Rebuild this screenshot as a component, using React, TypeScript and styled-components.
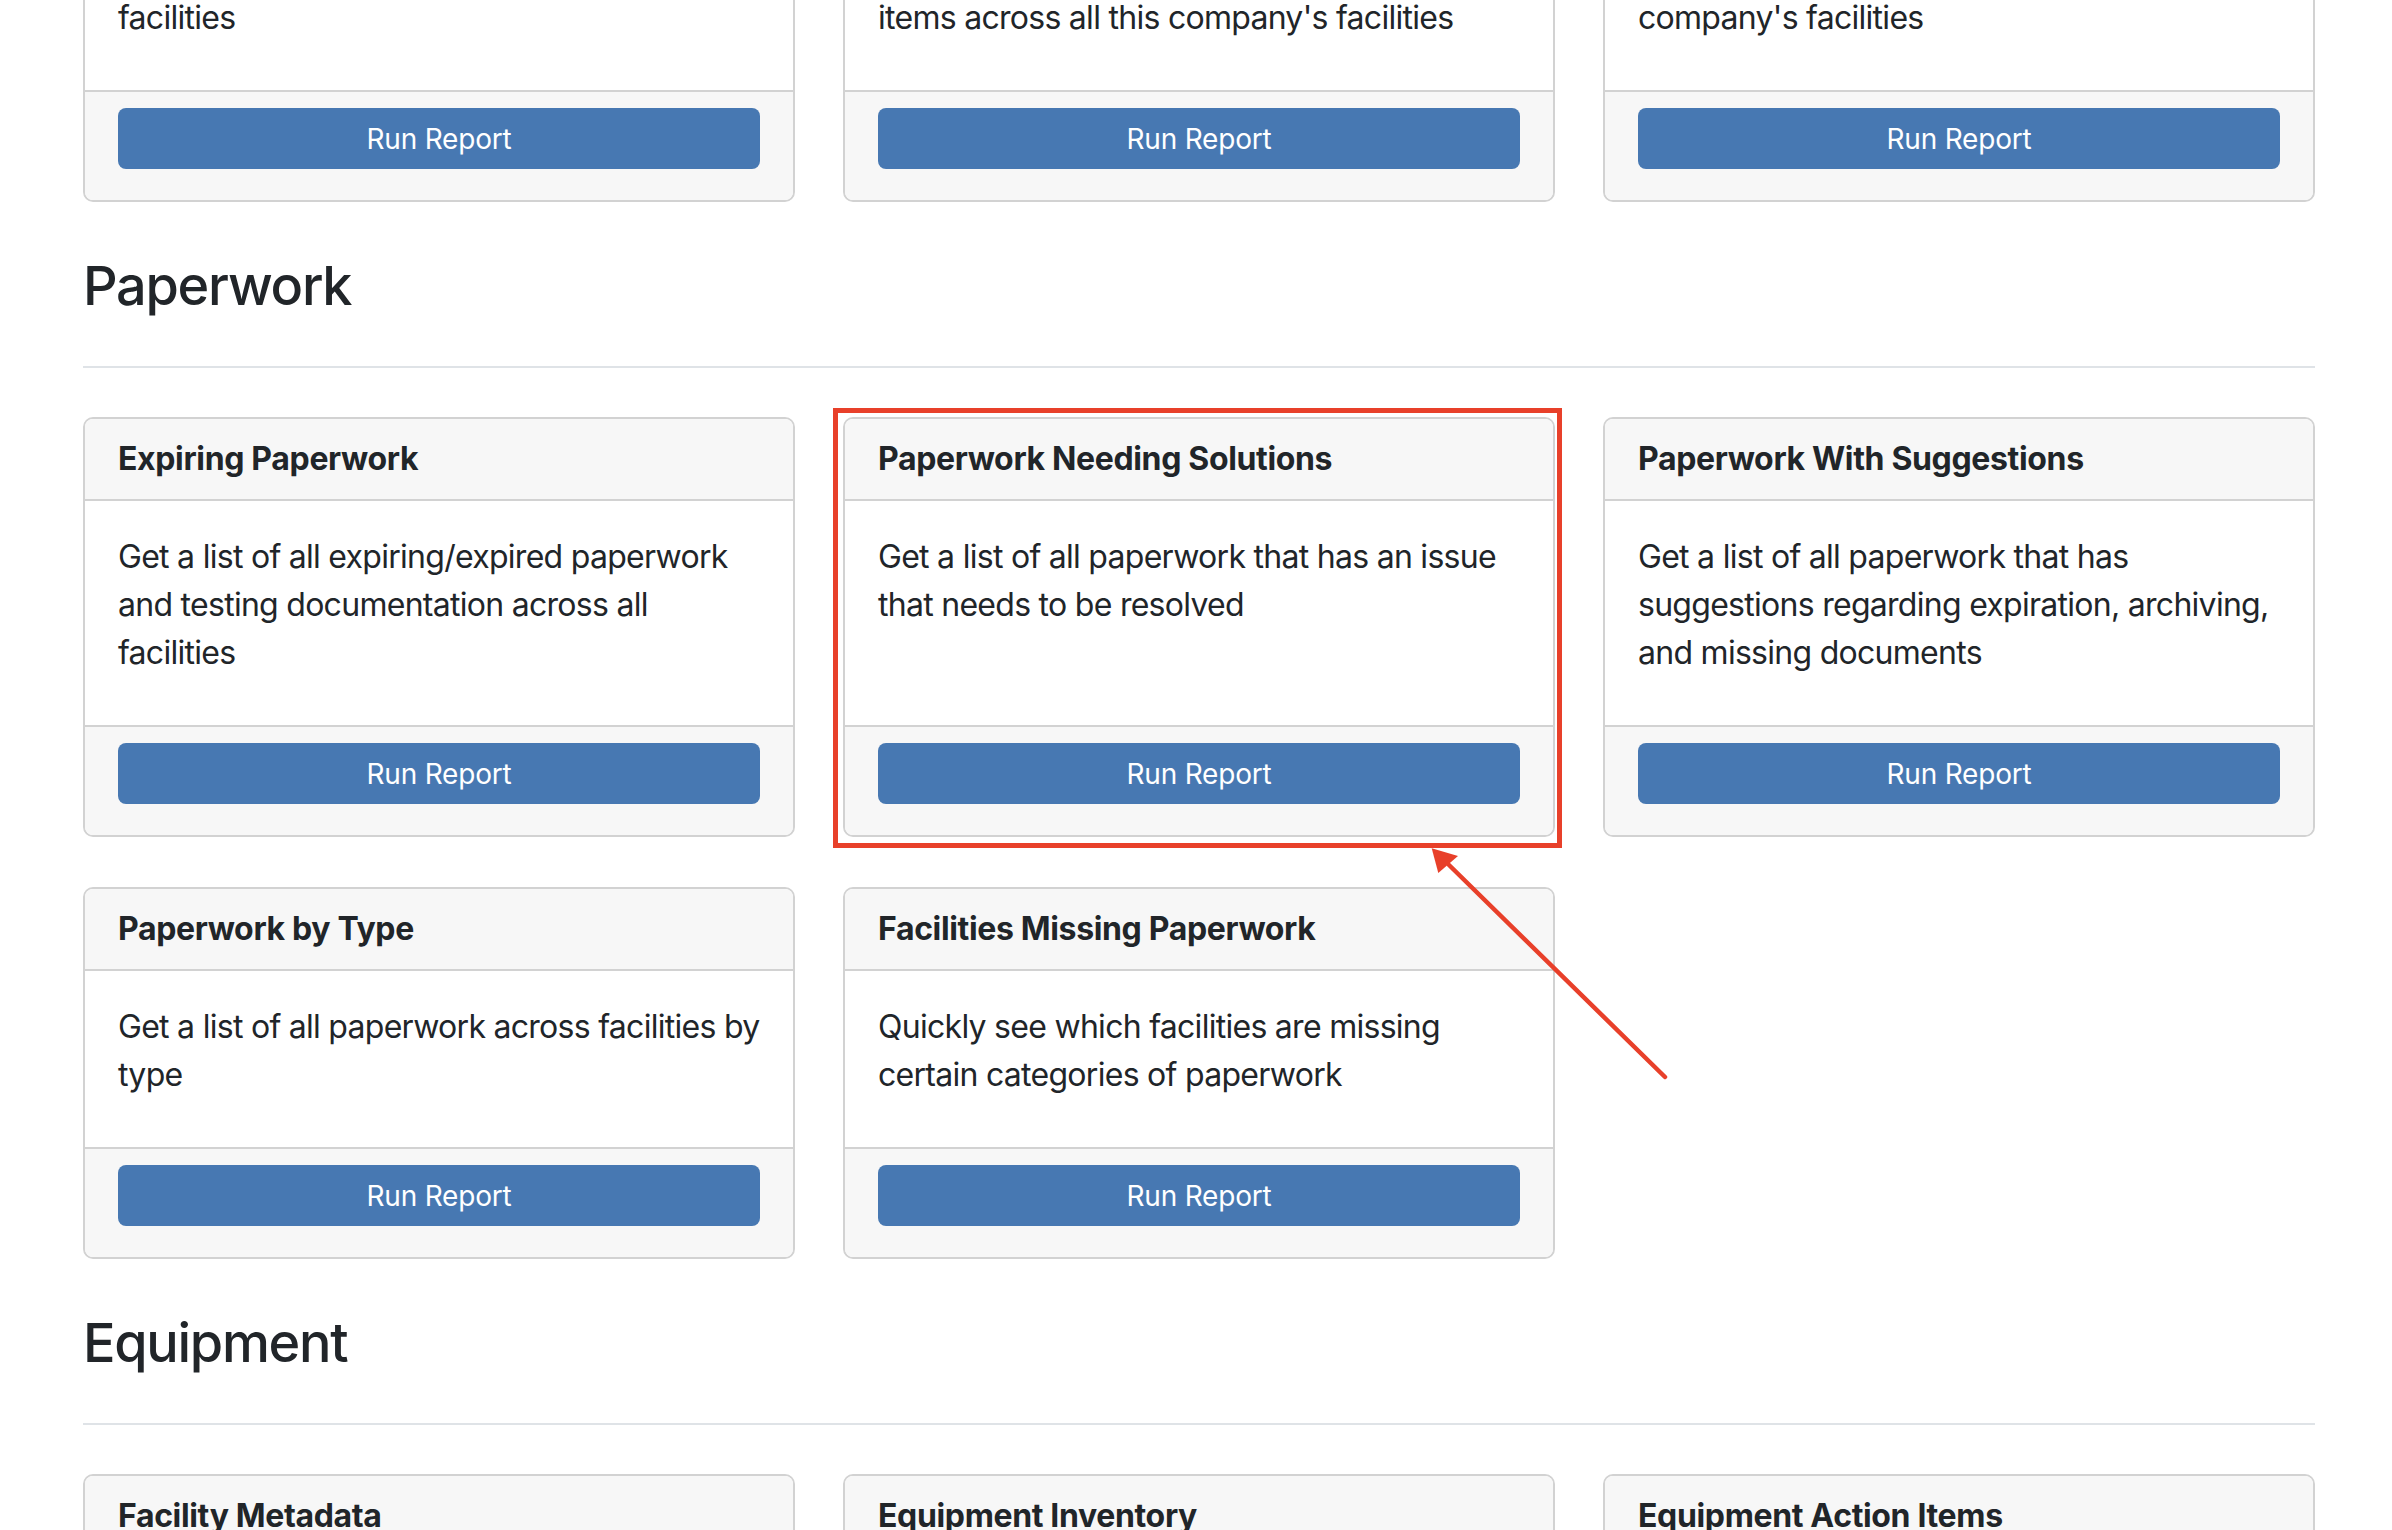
import React from "react";
import styled, { createGlobalStyle } from "styled-components";

interface Report {
	title: string;
	description: string;
}

interface ReportSection {
	name: string;
	reports: Report[];
}

const GlobalStyle = createGlobalStyle`
	html, body {
		margin: 0;
		padding: 0;
		background: #fff;
		overflow: hidden;
	}
	body {
		font-family: Inter, "Liberation Sans", sans-serif;
		color: #212529;
		-webkit-font-smoothing: antialiased;
	}
	* {
		box-sizing: border-box;
	}
`;

const Root = styled.div`
	position: relative;
	display: flow-root;
	height: 1530px;
	overflow: hidden;
`;

// the page is scrolled down: the first row of cards is partly above the fold
const Container = styled.div`
	width: 2232px;
	margin: -218px 0 0 83px;
`;

const Grid = styled.div`
	display: grid;
	grid-template-columns: repeat(3, 1fr);
	column-gap: 48px;
	row-gap: 50px;
`;

const Heading = styled.h2`
	margin: 51px 0 47px;
	font-size: 54px;
	font-weight: 500;
	line-height: 66px;
	letter-spacing: -1.3px;
`;

const Divider = styled.hr`
	margin: 0 0 49px;
	border: none;
	height: 2px;
	background: #dfe3e7;
`;

const Card = styled.div`
	display: flex;
	flex-direction: column;
	border: 2px solid #d2d2d2;
	border-radius: 10px;
	background: #fff;
	overflow: hidden;
`;

const CardHeader = styled.div`
	padding: 21px 33px;
	background: #f7f7f7;
	border-bottom: 2px solid #d2d2d2;
	font-size: 32px;
	font-weight: 700;
	line-height: 38px;
	letter-spacing: -0.35px;
`;

const CardBody = styled.div`
	flex: 1;
	padding: 32px 33px;
`;

const Description = styled.p`
	margin: 0 0 16px;
	font-size: 32px;
	line-height: 48px;
	letter-spacing: -0.72px;
	white-space: pre-line;
`;

const CardFooter = styled.div`
	padding: 16px 33px 31px;
	background: #f7f7f7;
	border-top: 2px solid #d2d2d2;
`;

const RunButton = styled.button`
	display: block;
	width: 100%;
	padding: 10px 0 9px;
	border: none;
	border-radius: 8px;
	background: #4778b2;
	color: #fff;
	font-family: inherit;
	font-size: 28px;
	line-height: 42px;
	letter-spacing: -0.2px;
	cursor: pointer;
`;

const Highlight = styled.div`
	position: absolute;
	left: 833px;
	top: 408px;
	width: 729px;
	height: 440px;
	border: 5px solid #e8402a;
	pointer-events: none;
`;

const ArrowSvg = styled.svg`
	position: absolute;
	left: 1400px;
	top: 830px;
	width: 300px;
	height: 270px;
	pointer-events: none;
`;

const topReports: Report[] = [
	{
		title: "Open Action Items",
		description:
			"Get a list of all open action items for\nequipment and paperwork across all\nfacilities",
	},
	{
		title: "Action Item History",
		description:
			"Get a list of all open and resolved\naction items including overdue action\nitems across all this company's facilities",
	},
	{
		title: "Action Item Summary",
		description:
			"Get a summary of action item counts by\ncategory and priority across all of this\ncompany's facilities",
	},
];

const sections: ReportSection[] = [
	{
		name: "Paperwork",
		reports: [
			{
				title: "Expiring Paperwork",
				description:
					"Get a list of all expiring/expired paperwork and testing documentation across all facilities",
			},
			{
				title: "Paperwork Needing Solutions",
				description: "Get a list of all paperwork that has an issue that needs to be resolved",
			},
			{
				title: "Paperwork With Suggestions",
				description:
					"Get a list of all paperwork that has suggestions regarding expiration, archiving, and missing documents",
			},
			{
				title: "Paperwork by Type",
				description: "Get a list of all paperwork across facilities by type",
			},
			{
				title: "Facilities Missing Paperwork",
				description: "Quickly see which facilities are missing certain categories of paperwork",
			},
		],
	},
	{
		name: "Equipment",
		reports: [
			{
				title: "Facility Metadata",
				description: "Get a list of all facilities and their equipment metadata",
			},
			{
				title: "Equipment Inventory",
				description: "Get a list of all equipment across all facilities",
			},
			{
				title: "Equipment Action Items",
				description: "Get a list of all equipment with open action items",
			},
		],
	},
];

const ReportCard = ({ report }: { report: Report }) => (
	<Card>
		<CardHeader>{report.title}</CardHeader>
		<CardBody>
			<Description>{report.description}</Description>
		</CardBody>
		<CardFooter>
			<RunButton type="button">Run Report</RunButton>
		</CardFooter>
	</Card>
);

const App = () => {
	return (
		<Root>
			<GlobalStyle />
			<Container>
				<Grid>
					{topReports.map((report) => (
						<ReportCard key={report.title} report={report} />
					))}
				</Grid>
				{sections.map((section) => (
					<section key={section.name}>
						<Heading>{section.name}</Heading>
						<Divider />
						<Grid>
							{section.reports.map((report) => (
								<ReportCard key={report.title} report={report} />
							))}
						</Grid>
					</section>
				))}
			</Container>

			<Highlight />
			<ArrowSvg viewBox="0 0 300 270">
				<line x1="265" y1="247" x2="49" y2="35" stroke="#e8402a" strokeWidth="4.5" strokeLinecap="round" />
				<polygon points="31.7,18.3 38.3,43 58,26" fill="#e8402a" />
			</ArrowSvg>
		</Root>
	);
};

export default App;
